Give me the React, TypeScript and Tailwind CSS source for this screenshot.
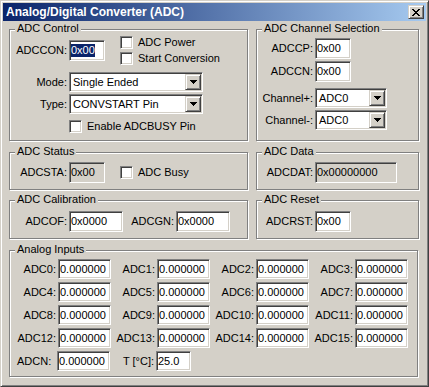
import React from "react"

const sunken =
  "border border-t-[#808080] border-l-[#808080] border-r-white border-b-white shadow-[inset_1px_1px_0_#404040,inset_-1px_-1px_0_#d4d0c8]"
const raised =
  "border border-t-[#d4d0c8] border-l-[#d4d0c8] border-r-[#404040] border-b-[#404040] shadow-[inset_1px_1px_0_#fff,inset_-1px_-1px_0_#808080] bg-[#d4d0c8]"

function Group({ title, className, children }: { title: string; className: string; children?: React.ReactNode }) {
  return (
    <div className={`relative border border-[#808080] shadow-[inset_1px_1px_0_#fff,1px_1px_0_#fff] ${className}`}>
      <span className="absolute left-[5px] top-[-8px] bg-[#d4d0c8] px-[2px] leading-[13px]">{title}</span>
      {children}
    </div>
  )
}

function Edit({ value, className, gray, selected }: { value: string; className: string; gray?: boolean; selected?: boolean }) {
  return (
    <div className={`${sunken} ${gray ? "bg-[#d4d0c8]" : "bg-white"} flex items-center pl-[1px] leading-[13px] ${className}`}>
      {selected ? <span className="bg-[#0a246a] text-white">{value}</span> : value}
    </div>
  )
}

function Arrow() {
  return (
    <svg width="7" height="4" viewBox="0 0 7 4" shapeRendering="crispEdges">
      <path d="M0 0h7v1H0zM1 1h5v1H1zM2 2h3v1H2zM3 3h1v1H3z" fill="#000" />
    </svg>
  )
}

function Combo({ value, className }: { value: string; className: string }) {
  return (
    <div className={`${sunken} bg-white flex p-[1px] h-[20px] ${className}`}>
      <div className="flex-1 flex items-center pl-[2px] leading-[13px]">{value}</div>
      <div className={`${raised} w-[16px] flex items-center justify-center`}>
        <Arrow />
      </div>
    </div>
  )
}

function Check({ label }: { label: string }) {
  return (
    <div className="flex items-center h-[13px]">
      <div className={`${sunken} bg-white w-[13px] h-[13px]`} />
      <span className="ml-[5px] leading-[13px]">{label}</span>
    </div>
  )
}

function Row({ label, labelW, children, className = "" }: { label: string; labelW: string; children: React.ReactNode; className?: string }) {
  return (
    <div className={`flex items-center ${className}`}>
      <span className={`${labelW} text-right leading-[13px] whitespace-nowrap`}>{label}</span>
      {children}
    </div>
  )
}

const analog = [
  ["ADC0", "ADC1", "ADC2", "ADC3"],
  ["ADC4", "ADC5", "ADC6", "ADC7"],
  ["ADC8", "ADC9", "ADC10", "ADC11"],
  ["ADC12", "ADC13", "ADC14", "ADC15"],
]

export default function App() {
  return (
    <div className="w-[429px] h-[387px] bg-[#d4d0c8] text-black text-[11px] font-['Liberation_Sans',Arial,sans-serif] border border-t-[#d4d0c8] border-l-[#d4d0c8] border-r-[#404040] border-b-[#404040] shadow-[inset_1px_1px_0_#fff,inset_-1px_-1px_0_#808080] p-[2px]">
      {/* title bar */}
      <div className="h-[18px] bg-linear-to-r/srgb from-[#0a246a] to-[#a6caf0] flex items-center pl-[3px] pr-[2px]">
        <span className="flex-1 text-white font-bold text-[12px] leading-[14px]">Analog/Digital Converter (ADC)</span>
        <div className={`${raised} w-[16px] h-[14px] flex items-center justify-center`}>
          <svg width="8" height="7" viewBox="0 0 8 7" shapeRendering="crispEdges">
            <path
              d="M0 0h2v1H0zM6 0h2v1H6zM1 1h2v1H1zM5 1h2v1H5zM2 2h4v1H2zM3 3h2v1H3zM2 4h4v1H2zM1 5h2v1H1zM5 5h2v1H5zM0 6h2v1H0zM6 6h2v1H6z"
              fill="#000"
            />
          </svg>
        </div>
      </div>

      <div className="px-[6px] pt-[8px]">
        <div className="flex gap-[8px]">
          {/* left column */}
          <div className="w-[239px] flex flex-col">
            <Group title="ADC Control" className="h-[112px]">
              <div className="flex items-center mt-[6px]">
                <Row label="ADCCON:" labelW="w-[57px]">
                  <Edit value="0x00" selected className="ml-[2px] w-[36px] h-[21px]" />
                </Row>
                <div className="ml-[15px] flex flex-col gap-[3px]">
                  <Check label="ADC Power" />
                  <Check label="Start Conversion" />
                </div>
              </div>
              <Row label="Mode:" labelW="w-[57px]" className="mt-[7px]">
                <Combo value="Single Ended" className="ml-[2px] w-[134px]" />
              </Row>
              <Row label="Type:" labelW="w-[57px]" className="mt-[2px]">
                <Combo value="CONVSTART Pin" className="ml-[2px] w-[134px]" />
              </Row>
              <div className="mt-[6px] ml-[59px]">
                <Check label="Enable ADCBUSY Pin" />
              </div>
            </Group>

            <Group title="ADC Status" className="h-[38px] mt-[11px]">
              <div className="flex items-center mt-[9px]">
                <Row label="ADCSTA:" labelW="w-[57px]">
                  <Edit value="0x00" gray className="ml-[2px] w-[36px] h-[21px]" />
                </Row>
                <div className="ml-[15px]">
                  <Check label="ADC Busy" />
                </div>
              </div>
            </Group>

            <Group title="ADC Calibration" className="h-[39px] mt-[10px]">
              <div className="flex items-center mt-[10px]">
                <Row label="ADCOF:" labelW="w-[57px]">
                  <Edit value="0x0000" className="ml-[2px] w-[54px] h-[21px]" />
                </Row>
                <Row label="ADCGN:" labelW="w-[51px]">
                  <Edit value="0x0000" className="ml-[2px] w-[54px] h-[21px]" />
                </Row>
              </div>
            </Group>
          </div>

          {/* right column */}
          <div className="w-[163px] flex flex-col">
            <Group title="ADC Channel Selection" className="h-[112px]">
              <Row label="ADCCP:" labelW="w-[56px]" className="mt-[8px]">
                <Edit value="0x00" className="ml-[2px] w-[36px] h-[21px]" />
              </Row>
              <Row label="ADCCN:" labelW="w-[56px]" className="mt-[2px]">
                <Edit value="0x00" className="ml-[2px] w-[36px] h-[21px]" />
              </Row>
              <Row label="Channel+:" labelW="w-[56px]" className="mt-[6px]">
                <Combo value="ADC0" className="ml-[2px] w-[72px]" />
              </Row>
              <Row label="Channel-:" labelW="w-[56px]" className="mt-[2px]">
                <Combo value="ADC0" className="ml-[2px] w-[72px]" />
              </Row>
            </Group>

            <Group title="ADC Data" className="h-[38px] mt-[11px]">
              <Row label="ADCDAT:" labelW="w-[56px]" className="mt-[9px]">
                <Edit value="0x00000000" gray className="ml-[2px] w-[82px] h-[21px]" />
              </Row>
            </Group>

            <Group title="ADC Reset" className="h-[39px] mt-[10px]">
              <Row label="ADCRST:" labelW="w-[56px]" className="mt-[10px]">
                <Edit value="0x00" className="ml-[2px] w-[36px] h-[21px]" />
              </Row>
            </Group>
          </div>
        </div>

        <Group title="Analog Inputs" className="w-[409px] h-[127px] mt-[11px]">
          <div className="flex flex-col gap-[3px] mt-[8px]">
            {analog.map((row) => (
              <div key={row[0]} className="flex">
                {row.map((name, i) => (
                  <Row key={name} label={`${name}:`} labelW={i === 0 ? "w-[46px]" : "w-[44px]"}>
                    <Edit value="0.000000" className="ml-[2px] w-[53px] h-[20px]" />
                  </Row>
                ))}
              </div>
            ))}
            <div className="flex items-center">
              <span className="w-[46px] pl-[7px] leading-[13px]">ADCN:</span>
              <Edit value="0.000000" className="ml-[1px] w-[53px] h-[20px]" />
              <Row label="T [°C]:" labelW="w-[44px]">
                <Edit value="25.0" className="ml-[2px] w-[35px] h-[20px]" />
              </Row>
            </div>
          </div>
        </Group>
      </div>
    </div>
  )
}
